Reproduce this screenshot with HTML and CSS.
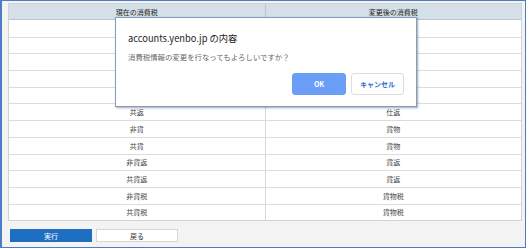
FILE: index.html
```html
<!DOCTYPE html>
<html lang="ja">
<head>
    <meta charset="UTF-8">
    <title>消費税変更</title>
    <link rel="stylesheet" href="styles.css">
</head>
<body>
    <div class="window">
        <div class="tax-table">
            <div class="row head">
                <div class="cell">現在の消費税</div>
                <div class="cell">変更後の消費税</div>
            </div>
            <!-- first rows are covered by the confirm dialog -->
            <div class="row"><div class="cell"></div><div class="cell"></div></div>
            <div class="row"><div class="cell"></div><div class="cell"></div></div>
            <div class="row"><div class="cell"></div><div class="cell"></div></div>
            <div class="row"><div class="cell"></div><div class="cell"></div></div>
            <div class="row"><div class="cell"></div><div class="cell"></div></div>
            <div class="row"><div class="cell">共返</div><div class="cell">仕返</div></div>
            <div class="row"><div class="cell">非貨</div><div class="cell">貨物</div></div>
            <div class="row"><div class="cell">共貨</div><div class="cell">貨物</div></div>
            <div class="row"><div class="cell">非貨返</div><div class="cell">貨返</div></div>
            <div class="row"><div class="cell">共貨返</div><div class="cell">貨返</div></div>
            <div class="row"><div class="cell">非貨税</div><div class="cell">貨物税</div></div>
            <div class="row"><div class="cell">共貨税</div><div class="cell">貨物税</div></div>
        </div>

        <div class="actions">
            <button class="btn btn-run">実行</button>
            <button class="btn btn-back">戻る</button>
        </div>
    </div>

    <!-- confirm() dialog -->
    <div class="dialog">
        <div class="dialog-title">accounts.yenbo.jp の内容</div>
        <div class="dialog-msg">消費税情報の変更を行なってもよろしいですか？</div>
        <div class="dialog-buttons">
            <button class="dlg-btn dlg-ok">OK</button>
            <button class="dlg-btn dlg-cancel">キャンセル</button>
        </div>
    </div>
</body>
</html>
```

FILE: styles.css
```css
* {
    margin: 0;
    padding: 0;
    box-sizing: border-box;
}

body {
    font-family: "Noto Sans CJK JP", "Noto Sans", sans-serif;
    background: #ffffff;
    position: relative;
    width: 531px;
    height: 249px;
    overflow: hidden;
}

.window {
    width: 526px;
    height: 248px;
    border: 1px solid #4a7cc8;
    border-left-width: 2px;
    background: #f3f3f3;
    padding: 2px 3px 0 6px;
}

.tax-table {
    width: 514px;
    border: 1px solid #d2d2d2;
    background: #fff;
}

.row {
    display: flex;
    height: 16.7px;
    border-top: 1px solid #dcdcdc;
    font-size: 7px;
    color: #444;
}

.row.head {
    height: 16px;
    border-top: none;
    border-bottom: 1px solid #b8c6d4;
    background: #d5dfe8;
    color: #222;
}

.row.head + .row {
    border-top: none;
}

.cell {
    flex: 1;
    display: flex;
    align-items: center;
    justify-content: center;
}

.cell + .cell {
    border-left: 1px solid #d8d8d8;
}

.row.head .cell + .cell {
    border-left-color: #bcc6d0;
}

.actions {
    display: flex;
    gap: 4px;
    margin: 8px 0 0 2px;
}

.btn {
    width: 82px;
    height: 13px;
    font-family: inherit;
    font-size: 7px;
    border: 1px solid #d6d6d6;
    background: #fff;
    color: #333;
}

.btn-run {
    background: #1e6fc2;
    border-color: #1e6fc2;
    color: #fff;
}

.dialog {
    position: absolute;
    left: 115px;
    top: 17px;
    width: 302px;
    height: 90px;
    background: #fff;
    border: 1px solid #7f9cc6;
    box-shadow: 1px 1px 2px rgba(0, 0, 0, 0.35);
    padding: 13px 12px 0 12px;
}

.dialog-title {
    font-size: 9.3px;
    color: #222;
    line-height: 14px;
}

.dialog-msg {
    font-size: 7.4px;
    color: #666;
    margin-top: 7px;
    line-height: 10px;
}

.dialog-buttons {
    display: flex;
    justify-content: flex-end;
    gap: 5px;
    margin-top: 11px;
}

.dlg-btn {
    width: 54px;
    height: 22px;
    border-radius: 3px;
    font-family: inherit;
    font-size: 7px;
    font-weight: bold;
}

.dlg-ok {
    background: #6a9ef7;
    border: 1px solid #6a9ef7;
    color: #fff;
}

.dlg-cancel {
    width: 53px;
    background: #fff;
    border: 1px solid #dadce0;
    color: #2f6bd6;
}
```
